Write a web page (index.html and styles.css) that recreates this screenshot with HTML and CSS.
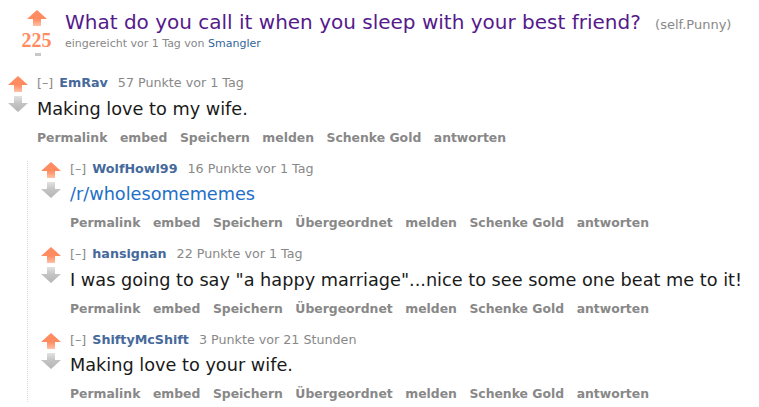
FILE: index.html
```html
<!DOCTYPE html>
<html lang="de">
<head>
<meta charset="UTF-8">
<title>What do you call it when you sleep with your best friend?</title>
<link rel="stylesheet" href="styles.css">
</head>
<body>
    <!-- shared gradients for the vote arrows -->
    <svg class="defs" width="0" height="0">
        <defs>
            <linearGradient id="upfill" x1="0" y1="0" x2="0" y2="1">
                <stop offset="0.55" stop-color="#ff8b60"/>
                <stop offset="1" stop-color="#ffc1a6"/>
            </linearGradient>
            <linearGradient id="downfill" x1="0" y1="0" x2="0" y2="1">
                <stop offset="0" stop-color="#e2e2e2"/>
                <stop offset="0.45" stop-color="#c4c4c4"/>
                <stop offset="1" stop-color="#b5b5b5"/>
            </linearGradient>
        </defs>
    </svg>

    <div class="post">
        <div class="midcol">
            <svg class="arrow up" viewBox="0 0 20 16"><path d="M10 0 L20 9 H14 V16 H6 V9 H0 Z"/></svg>
            <div class="score">225</div>
            <div class="stub"></div>
        </div>
        <div class="entry">
            <p class="title"><a href="#">What do you call it when you sleep with your best friend?</a> <span class="domain">(self.Punny)</span></p>
            <p class="tagline">eingereicht vor 1 Tag von <a class="submitter" href="#">Smangler</a></p>
        </div>
    </div>

    <div class="comment">
        <div class="arrows">
            <svg class="arrow up" viewBox="0 0 20 16"><path d="M10 0 L20 9 H14 V16 H6 V9 H0 Z"/></svg>
            <svg class="arrow down" viewBox="0 0 20 16"><path d="M6 0 H14 V7 H20 L10 16 L0 7 H6 Z"/></svg>
        </div>
        <div class="entry">
            <p class="tagline"><span class="expand">[–]</span> <a class="author" href="#">EmRav</a> 57 Punkte vor 1 Tag</p>
            <p class="body">Making love to my wife.</p>
            <ul class="buttons">
                <li>Permalink</li><li>embed</li><li>Speichern</li><li>melden</li><li>Schenke Gold</li><li>antworten</li>
            </ul>
        </div>
    </div>

    <div class="children">
        <div class="comment">
            <div class="arrows">
                <svg class="arrow up" viewBox="0 0 20 16"><path d="M10 0 L20 9 H14 V16 H6 V9 H0 Z"/></svg>
                <svg class="arrow down" viewBox="0 0 20 16"><path d="M6 0 H14 V7 H20 L10 16 L0 7 H6 Z"/></svg>
            </div>
            <div class="entry">
                <p class="tagline"><span class="expand">[–]</span> <a class="author" href="#">WolfHowl99</a> 16 Punkte vor 1 Tag</p>
                <p class="body"><a href="#">/r/wholesomememes</a></p>
                <ul class="buttons">
                    <li>Permalink</li><li>embed</li><li>Speichern</li><li>Übergeordnet</li><li>melden</li><li>Schenke Gold</li><li>antworten</li>
                </ul>
            </div>
        </div>

        <div class="comment">
            <div class="arrows">
                <svg class="arrow up" viewBox="0 0 20 16"><path d="M10 0 L20 9 H14 V16 H6 V9 H0 Z"/></svg>
                <svg class="arrow down" viewBox="0 0 20 16"><path d="M6 0 H14 V7 H20 L10 16 L0 7 H6 Z"/></svg>
            </div>
            <div class="entry">
                <p class="tagline"><span class="expand">[–]</span> <a class="author" href="#">hansignan</a> 22 Punkte vor 1 Tag</p>
                <p class="body">I was going to say "a happy marriage"...nice to see some one beat me to it!</p>
                <ul class="buttons">
                    <li>Permalink</li><li>embed</li><li>Speichern</li><li>Übergeordnet</li><li>melden</li><li>Schenke Gold</li><li>antworten</li>
                </ul>
            </div>
        </div>

        <div class="comment">
            <div class="arrows">
                <svg class="arrow up" viewBox="0 0 20 16"><path d="M10 0 L20 9 H14 V16 H6 V9 H0 Z"/></svg>
                <svg class="arrow down" viewBox="0 0 20 16"><path d="M6 0 H14 V7 H20 L10 16 L0 7 H6 Z"/></svg>
            </div>
            <div class="entry">
                <p class="tagline"><span class="expand">[–]</span> <a class="author" href="#">ShiftyMcShift</a> 3 Punkte vor 21 Stunden</p>
                <p class="body">Making love to your wife.</p>
                <ul class="buttons">
                    <li>Permalink</li><li>embed</li><li>Speichern</li><li>Übergeordnet</li><li>melden</li><li>Schenke Gold</li><li>antworten</li>
                </ul>
            </div>
        </div>
    </div>
</body>
</html>
```

FILE: styles.css
```css
body {
    margin: 8px;
    background: #fff;
    font-family: "DejaVu Sans", Verdana, sans-serif;
    color: #1a1a1a;
}

p, ul {
    margin: 0;
    padding: 0;
}

a {
    text-decoration: none;
}

.defs {
    position: absolute;
}

/* post header */
.post {
    display: flex;
    height: 67px;
}

.post .midcol {
    width: 57px;
    display: flex;
    flex-direction: column;
    align-items: center;
    padding-top: 2px;
}

.score {
    font-family: "Liberation Serif", serif;
    font-weight: bold;
    font-size: 20px;
    line-height: 18px;
    color: #ff8b60;
    margin-top: 5px;
}

.stub {
    width: 6px;
    height: 3px;
    margin-top: 4px;
    margin-left: 2px;
    background: #c8c8c8;
}

.title {
    font-size: 20px;
    line-height: 24px;
    padding-top: 2px;
}

.title a {
    color: #551a8b;
}

.domain {
    font-size: 13px;
    color: #888;
    margin-left: 8px;
}

.post .tagline {
    font-size: 11px;
    margin-top: -1px;
}

.submitter {
    color: #369;
}

/* arrows */
.arrow {
    display: block;
    width: 20px;
    height: 16px;
}

.arrow.up {
    fill: url(#upfill);
}

.arrow.down {
    fill: url(#downfill);
}

/* comments */
.comment {
    display: flex;
    gap: 9px;
    margin-bottom: 15px;
}

.arrows {
    padding-top: 1px;
    display: flex;
    flex-direction: column;
    gap: 4px;
}

.tagline {
    font-size: 12.7px;
    line-height: 16px;
    color: #888;
}

.expand {
    color: #888;
}

.author {
    color: #46699b;
    font-weight: bold;
    margin: 0 6px 0 2px;
}

.body {
    font-size: 17.7px;
    line-height: 24px;
    margin-top: 5.5px;
}

.body a {
    color: #1e6fc7;
}

.buttons {
    list-style: none;
    display: flex;
    gap: 12.5px;
    margin-top: 9px;
    font-size: 12.4px;
    font-weight: bold;
    line-height: 16px;
    color: #888;
}

.children {
    margin-left: 19px;
    border-left: 1px dotted #d8d8d8;
    padding-left: 13px;
}
```
